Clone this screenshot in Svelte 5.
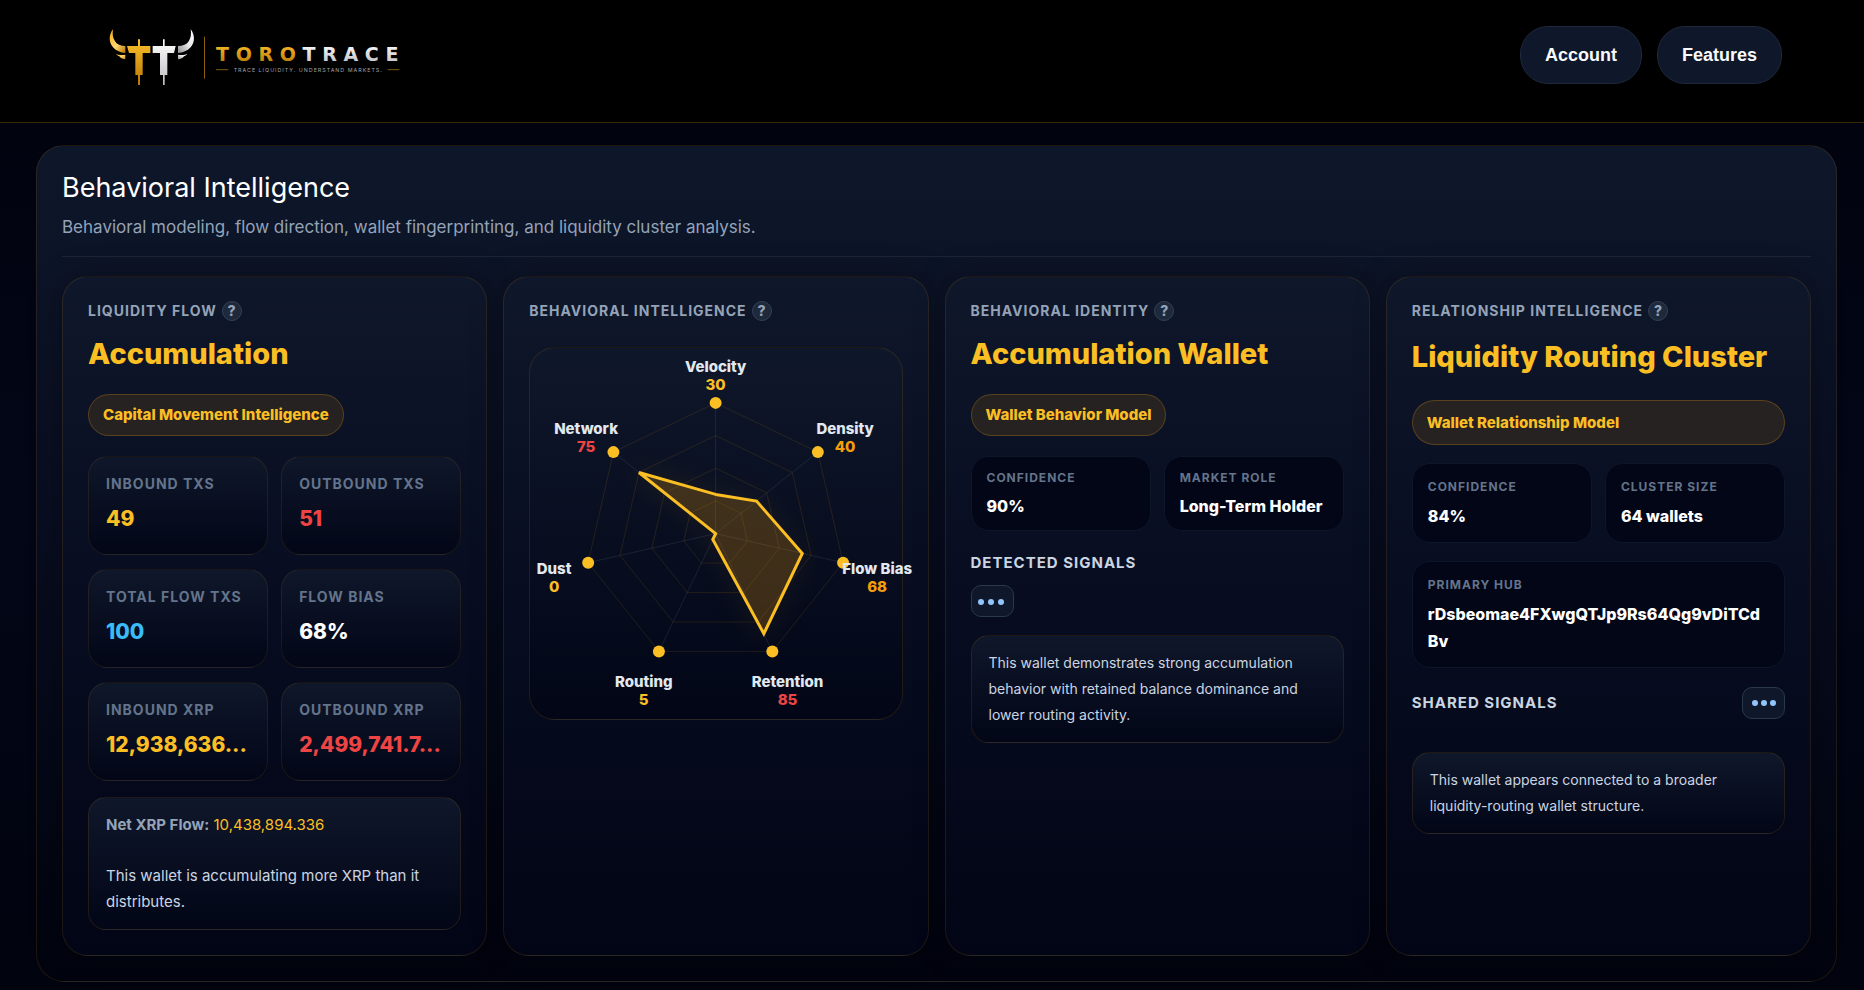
<script lang="ts">
  type Tone = 'amber' | 'orange' | 'red' | 'blue' | 'white';

  const flowStats: { label: string; value: string; tone: Tone }[] = [
    { label: 'Inbound TXs', value: '49', tone: 'amber' },
    { label: 'Outbound TXs', value: '51', tone: 'red' },
    { label: 'Total Flow TXs', value: '100', tone: 'blue' },
    { label: 'Flow Bias', value: '68%', tone: 'white' },
    { label: 'Inbound XRP', value: '12,938,636...', tone: 'amber' },
    { label: 'Outbound XRP', value: '2,499,741.7...', tone: 'red' },
  ];

  const metrics: { name: string; value: number; tone: Tone }[] = [
    { name: 'Velocity', value: 30, tone: 'amber' },
    { name: 'Density', value: 40, tone: 'orange' },
    { name: 'Flow Bias', value: 68, tone: 'orange' },
    { name: 'Retention', value: 85, tone: 'red' },
    { name: 'Routing', value: 5, tone: 'amber' },
    { name: 'Dust', value: 0, tone: 'amber' },
    { name: 'Network', value: 75, tone: 'red' },
  ];

  const CENTER = 186;
  const RADIUS = 131;
  const LABEL_RADIUS = 166;

  function point(i: number, r: number) {
    const a = (Math.PI * 2 * i) / metrics.length - Math.PI / 2;
    return { x: CENTER + Math.cos(a) * r, y: CENTER + Math.sin(a) * r };
  }

  function ring(scale: (i: number) => number) {
    return metrics
      .map((_, i) => point(i, RADIUS * scale(i)))
      .map((p) => `${p.x},${p.y}`)
      .join(' ');
  }

  const rings = [0.25, 0.5, 0.75, 1].map((s) => ring(() => s));
  const shape = ring((i) => metrics[i].value / 100);
</script>

{#snippet heading(text: string)}
  <div class="card-label">
    <h3>{text}</h3>
    <button class="help" type="button" aria-label="About {text}">?</button>
  </div>
{/snippet}

{#snippet mini(label: string, value: string)}
  <div class="mini">
    <span class="mini-label">{label}</span>
    <strong>{value}</strong>
  </div>
{/snippet}

{#snippet more(label: string)}
  <button class="more" type="button" aria-label={label}>
    <i></i><i></i><i></i>
  </button>
{/snippet}

<header class="topbar">
  <a class="brand" href="/" aria-label="ToroTrace">
    <svg viewBox="0 0 990 270" width="330" height="90">
      <defs>
        <linearGradient id="gold" x1="0" y1="0" x2="0" y2="1">
          <stop offset="0" stop-color="#fbc02d" />
          <stop offset="1" stop-color="#b87503" />
        </linearGradient>
        <linearGradient id="silver" x1="0" y1="0" x2="0" y2="1">
          <stop offset="0" stop-color="#ffffff" />
          <stop offset="1" stop-color="#bdbdc2" />
        </linearGradient>
        <linearGradient id="hornGold" x1="0" y1="0" x2="1" y2="1">
          <stop offset="0" stop-color="#f5a90f" />
          <stop offset="0.55" stop-color="#ffd873" />
          <stop offset="1" stop-color="#b87503" />
        </linearGradient>
        <linearGradient id="hornSilver" x1="1" y1="0" x2="0" y2="1">
          <stop offset="0" stop-color="#ffffff" />
          <stop offset="0.5" stop-color="#e8e8ea" />
          <stop offset="1" stop-color="#8f8f94" />
        </linearGradient>
      </defs>
      <path fill="url(#hornGold)" d="M69 58C56 74 56 98 69 112C79 123 91 128 106 129V108C92 108 81 104 75 94C68 84 67 71 69 58Z" />
      <path fill="url(#hornGold)" d="M78 131C86 136 96 136 106 134V148C97 147 92 144 88 139C84 137 80 135 78 131Z" />
      <path fill="url(#gold)" d="M144 88H150V108H181V129H158V195H150V225H144V195H136V129H117L111 108H144Z" />
      <path fill="url(#silver)" d="M219 88H224V108H257L252 129H232V195H224V225H219V195H210V129H188V108H219Z" />
      <path fill="url(#hornSilver)" d="M302 58C315 74 315 98 302 112C292 123 279 128 264 129V108C279 108 290 104 296 94C303 84 304 71 302 58Z" />
      <path fill="url(#hornSilver)" d="M292 131C284 136 274 136 264 134V148C273 147 278 144 282 139C286 137 290 135 292 131Z" />
      <path d="M343.500 80V206" stroke="#8a620c" stroke-width="3" />
      <text class="wordmark" x="378" y="153"><tspan fill="url(#gold)">TORO</tspan><tspan fill="url(#silver)">TRACE</tspan></text>
      <path d="M378 179H415M893 179H928" stroke="#7a5a10" stroke-width="3" />
      <text class="tagline" x="431" y="185">TRACE LIQUIDITY. UNDERSTAND MARKETS.</text>
    </svg>
  </a>
  <nav>
    <button type="button">Account</button>
    <button type="button">Features</button>
  </nav>
</header>

<main>
  <section class="panel">
    <div class="panel-head">
      <h2>Behavioral Intelligence</h2>
      <p>Behavioral modeling, flow direction, wallet fingerprinting, and liquidity cluster analysis.</p>
    </div>

    <div class="cards">
      <article class="card">
        {@render heading('Liquidity Flow')}
        <div class="title">Accumulation</div>
        <span class="pill">Capital Movement Intelligence</span>
        <div class="stats">
          {#each flowStats as stat}
            <div class="stat">
              <span class="stat-label">{stat.label}</span>
              <strong class={stat.tone}>{stat.value}</strong>
            </div>
          {/each}
        </div>
        <div class="note flow-note">
          <p><b>Net XRP Flow:</b> <span class="amber">10,438,894.336</span></p>
          <p>This wallet is accumulating more XRP than it distributes.</p>
        </div>
      </article>

      <article class="card">
        {@render heading('Behavioral Intelligence')}
        <div class="radar">
          <svg viewBox="0 0 372 372" role="img" aria-label="Behavior radar">
            {#each rings as points}
              <polygon class="ring" {points} />
            {/each}
            {#each metrics as _, i}
              {@const end = point(i, RADIUS)}
              <line class="axis" x1={CENTER} y1={CENTER} x2={end.x} y2={end.y} />
            {/each}
            <polygon class="shape" points={shape} />
            {#each metrics as metric, i}
              {@const dot = point(i, RADIUS)}
              {@const label = point(i, LABEL_RADIUS)}
              <circle cx={dot.x} cy={dot.y} r="6" />
              <text class="name" x={label.x} y={label.y + 4}>{metric.name}</text>
              <text class={metric.tone} x={label.x} y={label.y + 22}>{metric.value}</text>
            {/each}
          </svg>
        </div>
      </article>

      <article class="card">
        {@render heading('Behavioral Identity')}
        <div class="title">Accumulation Wallet</div>
        <span class="pill">Wallet Behavior Model</span>
        <div class="minis">
          {@render mini('Confidence', '90%')}
          {@render mini('Market Role', 'Long-Term Holder')}
        </div>
        <div class="signals">
          <h4>Detected Signals</h4>
          {@render more('Show detected signals')}
        </div>
        <p class="note">
          This wallet demonstrates strong accumulation behavior with retained balance dominance and lower routing activity.
        </p>
      </article>

      <article class="card relation">
        {@render heading('Relationship Intelligence')}
        <div class="title">Liquidity Routing Cluster</div>
        <span class="pill">Wallet Relationship Model</span>
        <div class="minis">
          {@render mini('Confidence', '84%')}
          {@render mini('Cluster Size', '64 wallets')}
        </div>
        <div class="hub">
          {@render mini('Primary Hub', 'rDsbeomae4FXwgQTJp9Rs64Qg9vDiTCdBv')}
        </div>
        <div class="signals">
          <h4>Shared Signals</h4>
          {@render more('Show shared signals')}
        </div>
        <p class="note">This wallet appears connected to a broader liquidity-routing wallet structure.</p>
      </article>
    </div>
  </section>
</main>

<style>
  :global(body) {
    margin: 0;
    background: linear-gradient(180deg, #01020c 0%, #020617 50%, #01030e 100%) fixed;
    color: #e2e8f0;
    font-family: Inter, 'Liberation Sans', sans-serif;
  }

  h2, h3, h4, p { margin: 0; }
  button { font-family: inherit; cursor: pointer; }

  .amber { color: #fbbf24; fill: #fbbf24; }
  .orange { color: #f59e0b; fill: #f59e0b; }
  .red { color: #ef4444; fill: #ef4444; }
  .blue { color: #38bdf8; fill: #38bdf8; }
  .white { color: #fff; fill: #fff; }

  .topbar {
    display: flex;
    justify-content: space-between;
    align-items: flex-start;
    padding: 10px 82px 22px 90px;
    background: #000;
    border-bottom: 1px solid #3a2606;
  }
  .brand svg { display: block; }
  .wordmark {
    font-family: 'DejaVu Sans', sans-serif;
    font-size: 57px;
    font-weight: 700;
    letter-spacing: 20px;
  }
  .tagline {
    font-size: 16px;
    letter-spacing: 3px;
    fill: #a3a3a3;
  }

  nav {
    display: flex;
    gap: 15px;
    padding-top: 16px;
  }
  nav button {
    padding: 18px 24px;
    border: 1px solid #1e293b;
    border-radius: 28px;
    background: #0f172a;
    color: #f8fafc;
    font: bold 18px/20px 'Liberation Sans', Arial, sans-serif;
  }

  main { padding: 22px 27px 8px 36px; }

  .panel {
    padding: 25px;
    border: 1px solid rgba(245, 158, 11, 0.12);
    border-radius: 28px;
    background: linear-gradient(180deg, #0e172a 0%, #080d20 45%, #01030e 100%);
  }
  .panel-head {
    padding-bottom: 17px;
    border-bottom: 1px solid #1c2636;
    margin-bottom: 19px;
  }
  .panel-head h2 {
    color: #fff;
    font-size: 27px;
    font-weight: 400;
    line-height: 34px;
  }
  .panel-head p {
    margin-top: 10px;
    color: #94a3b8;
    font-size: 17px;
    line-height: 24px;
  }

  .cards {
    display: grid;
    grid-template-columns: repeat(4, minmax(0, 1fr));
    gap: 16px;
  }
  .card {
    padding: 24px 25px 25px;
    border: 1px solid rgba(245, 158, 11, 0.12);
    border-radius: 26px;
    background: linear-gradient(180deg, #0f172a 0%, #070c20 50%, #020515 100%);
    box-shadow: 0 0 32px rgba(0, 0, 0, 0.28);
  }

  .card-label {
    display: flex;
    align-items: center;
    gap: 5px;
  }
  .card-label h3 {
    color: #94a3b8;
    font-size: 14px;
    font-weight: 700;
    line-height: 20px;
    letter-spacing: 1px;
    text-transform: uppercase;
  }
  .help {
    width: 20px;
    height: 20px;
    padding: 0;
    border: 1px solid #334155;
    border-radius: 50%;
    background: #1e293b;
    color: #94a3b8;
    font-size: 14px;
    font-weight: 800;
    line-height: 18px;
  }

  .title {
    margin-top: 14px;
    color: #fbbf24;
    font-size: 29px;
    font-weight: 800;
    line-height: 38px;
    white-space: nowrap;
  }
  .pill {
    display: block;
    width: fit-content;
    margin-top: 21px;
    padding: 9px 14px;
    border: 1px solid rgba(245, 158, 11, 0.25);
    border-radius: 24px;
    background: #262222;
    color: #fbbf24;
    font-size: 15px;
    font-weight: 800;
    line-height: 22px;
  }

  .stats {
    display: grid;
    grid-template-columns: repeat(2, minmax(0, 1fr));
    gap: 14px 13px;
    margin-top: 20px;
  }
  .stat {
    padding: 18px 17px 21px;
    border: 1px solid rgba(245, 158, 11, 0.1);
    border-radius: 20px;
    background: linear-gradient(180deg, #0f172a 0%, #020617 100%);
  }
  .stat-label {
    display: block;
    color: #64748b;
    font-size: 14px;
    font-weight: 700;
    line-height: 18px;
    letter-spacing: 1px;
    text-transform: uppercase;
    white-space: nowrap;
  }
  .stat strong {
    display: block;
    margin-top: 12px;
    font-size: 21px;
    font-weight: 800;
    line-height: 28px;
    white-space: nowrap;
  }

  .note {
    margin-top: 18px;
    padding: 14px 17px;
    border: 1px solid rgba(245, 158, 11, 0.12);
    border-radius: 18px;
    background: linear-gradient(180deg, #0f172a 0%, #020617 100%);
    color: #cbd5e1;
    font-size: 14px;
    line-height: 26px;
  }
  .flow-note {
    margin-top: 16px;
    font-size: 15px;
  }
  .flow-note b { color: #94a3b8; }
  .flow-note p + p { margin-top: 25px; }

  .radar {
    margin-top: 26px;
    border: 1px solid rgba(245, 158, 11, 0.12);
    border-radius: 26px;
    background: linear-gradient(180deg, #0f172a 0%, #020617 100%);
  }
  .radar svg {
    display: block;
    width: 100%;
    overflow: visible;
  }
  .ring {
    fill: none;
    stroke: rgba(245, 158, 11, 0.12);
  }
  .axis { stroke: rgba(148, 163, 184, 0.14); }
  .shape {
    fill: rgba(245, 158, 11, 0.2);
    stroke: #fbbf24;
    stroke-width: 3;
    filter: drop-shadow(0 0 14px rgba(245, 158, 11, 0.2));
  }
  .radar circle { fill: #fbbf24; }
  .radar text {
    font-size: 15px;
    font-weight: 800;
    text-anchor: middle;
  }
  .name { fill: #e2e8f0; }

  .minis {
    display: grid;
    grid-template-columns: repeat(2, minmax(0, 1fr));
    gap: 13px;
    margin-top: 20px;
  }
  .mini {
    padding: 13px 15px;
    border: 1px solid #0e1629;
    border-radius: 18px;
    background: #020617;
  }
  .mini-label {
    display: block;
    color: #64748b;
    font-size: 12px;
    font-weight: 700;
    line-height: 16px;
    letter-spacing: 1px;
    text-transform: uppercase;
  }
  .mini strong {
    display: block;
    margin-top: 9px;
    color: #fff;
    font-size: 16px;
    font-weight: 800;
    line-height: 22px;
    overflow-wrap: anywhere;
  }

  .signals { margin-top: 22px; }
  .signals h4 {
    color: #cbd5e1;
    font-size: 15px;
    font-weight: 700;
    line-height: 20px;
    letter-spacing: 1px;
    text-transform: uppercase;
  }
  .more {
    display: flex;
    align-items: center;
    gap: 4px;
    width: 43px;
    height: 32px;
    margin-top: 12px;
    padding: 2px 6px 0;
    border: 1px solid #2a384c;
    border-radius: 10px;
    background: #0f172a;
  }
  .more i {
    width: 6px;
    height: 6px;
    border-radius: 50%;
    background: #93c5fd;
  }

  .relation .title { margin-top: 17px; }
  .relation .pill {
    width: auto;
    margin-top: 24px;
    padding: 10px 14px;
    line-height: 23px;
  }
  .relation .minis, .relation .hub { margin-top: 18px; }
  .relation .mini { padding: 15px 15px 12px; }
  .relation .mini strong {
    margin-top: 8px;
    line-height: 27px;
  }
  .relation .signals {
    display: flex;
    justify-content: space-between;
    align-items: center;
    margin-top: 19px;
  }
  .relation .more {
    justify-content: center;
    gap: 3px;
    margin-top: 0;
    padding-top: 0;
  }
  .relation .note { margin-top: 33px; }
</style>
